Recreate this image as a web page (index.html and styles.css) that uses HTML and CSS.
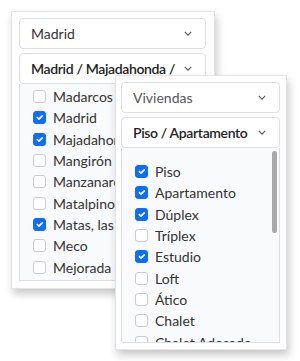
FILE: index.html
```html
<!DOCTYPE html>
<html lang="es">
<head>
    <meta charset="UTF-8">
    <title>Filtros</title>
    <link rel="stylesheet" href="styles.css">
</head>
<body>
    <!-- Panel de municipios -->
    <div class="panel panel-back">
        <div class="select">
            <span class="select-text">Madrid</span>
            <svg class="chevron" viewBox="0 0 10 6"><path d="M1 1l4 4 4-4"/></svg>
        </div>
        <div class="select select-bold">
            <span class="select-text">Madrid / Majadahonda / Matas, las</span>
            <svg class="chevron" viewBox="0 0 10 6"><path d="M1 1l4 4 4-4"/></svg>
        </div>
        <div class="list list-back">
            <label class="item"><span class="box"></span>Madarcos</label>
            <label class="item"><span class="box checked"></span>Madrid</label>
            <label class="item"><span class="box checked"></span>Majadahonda</label>
            <label class="item"><span class="box"></span>Mangirón</label>
            <label class="item"><span class="box"></span>Manzanares el Real</label>
            <label class="item"><span class="box"></span>Matalpino</label>
            <label class="item"><span class="box checked"></span>Matas, las</label>
            <label class="item"><span class="box"></span>Meco</label>
            <label class="item"><span class="box"></span>Mejorada del Campo</label>
        </div>
    </div>

    <!-- Panel de tipos de vivienda -->
    <div class="panel panel-front">
        <div class="select">
            <span class="select-text muted">Viviendas</span>
            <svg class="chevron" viewBox="0 0 10 6"><path d="M1 1l4 4 4-4"/></svg>
        </div>
        <div class="select select-bold">
            <span class="select-text">Piso / Apartamento</span>
            <svg class="chevron" viewBox="0 0 10 6"><path d="M1 1l4 4 4-4"/></svg>
        </div>
        <div class="list list-front">
            <div class="thumb"></div>
            <label class="item"><span class="box checked"></span>Piso</label>
            <label class="item"><span class="box checked"></span>Apartamento</label>
            <label class="item"><span class="box checked"></span>Dúplex</label>
            <label class="item"><span class="box"></span>Tríplex</label>
            <label class="item"><span class="box checked"></span>Estudio</label>
            <label class="item"><span class="box"></span>Loft</label>
            <label class="item"><span class="box"></span>Ático</label>
            <label class="item"><span class="box"></span>Chalet</label>
            <label class="item"><span class="box"></span>Chalet Adosado</label>
        </div>
    </div>
</body>
</html>
```

FILE: styles.css
```css
body {
    margin: 0;
    width: 300px;
    height: 361px;
    background-color: #fff;
    font-family: Lato, "Noto Sans", sans-serif;
    font-size: 14px;
    color: #333;
    position: relative;
    overflow: hidden;
}
.panel {
    position: absolute;
    box-sizing: border-box;
    background-color: #fff;
    border: 1px solid #e4e4e4;
    box-shadow: 2px 5px 8px rgba(0, 0, 0, 0.22);
    display: flex;
    flex-direction: column;
    gap: 4px;
}
.panel-back {
    left: 11px;
    top: 11px;
    width: 204px;
    height: 278px;
    padding: 6px 8px 7px 7px;
}
.panel-front {
    left: 115px;
    top: 75px;
    width: 172px;
    height: 275px;
    padding: 6px 6px 6px 5px;
}
.select {
    box-sizing: border-box;
    height: 31px;
    flex-shrink: 0;
    border: 1px solid #dcdfe3;
    border-radius: 4px;
    background-color: #fff;
    display: flex;
    align-items: center;
    padding: 0 13px 0 11px;
    gap: 6px;
}
.select-text {
    flex: 1;
    white-space: nowrap;
    overflow: hidden;
}
.select-bold {
    font-weight: 600;
    color: #222;
    letter-spacing: -0.35px;
}
.muted {
    color: #555;
}
.chevron {
    width: 8px;
    height: 5px;
    flex-shrink: 0;
    fill: none;
    stroke: #555;
    stroke-width: 1.4;
}
.list {
    position: relative;
    flex: 1;
    margin-top: -4px;
    border: 1px solid #dcdfe3;
    border-top: none;
    background-color: #f9fafb;
    overflow: hidden;
    padding-left: 13px;
}
.list-back {
    padding-top: 2px;
}
.list-front {
    padding-top: 13px;
}
.thumb {
    position: absolute;
    right: 2px;
    top: 3px;
    width: 5px;
    height: 82px;
    border-radius: 3px;
    background-color: #a9a9a9;
}
.item {
    display: flex;
    align-items: center;
    gap: 7px;
    height: 21.3px;
    white-space: nowrap;
}
.box {
    box-sizing: border-box;
    width: 13px;
    height: 13px;
    flex-shrink: 0;
    border: 1px solid #c9ccd0;
    border-radius: 3px;
    background-color: #fff;
}
.box.checked {
    border-color: #0d6efd;
    background-color: #0d6efd;
    background-image: url("data:image/svg+xml,%3Csvg xmlns='http://www.w3.org/2000/svg' viewBox='0 0 20 20'%3E%3Cpath fill='none' stroke='%23fff' stroke-linecap='round' stroke-linejoin='round' stroke-width='3' d='M6 10l3 3l6-6'/%3E%3C/svg%3E");
    background-size: 100% 100%;
}
```
